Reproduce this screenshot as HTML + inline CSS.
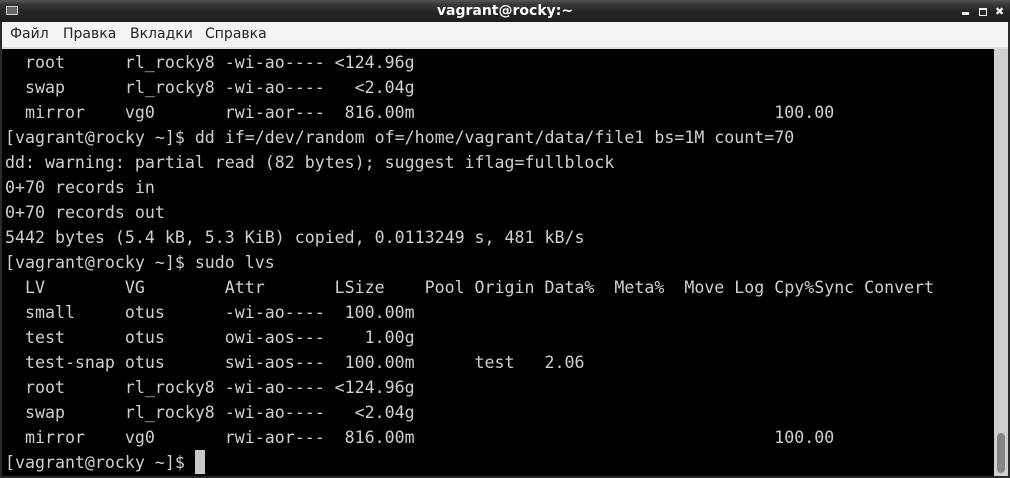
<!DOCTYPE html>
<html><head><meta charset="utf-8"><style>
html,body{margin:0;padding:0;width:1010px;height:478px;overflow:hidden;background:#2a2a2a;}
#title{position:absolute;left:0;top:0;width:1010px;height:22px;background:linear-gradient(#555 0,#3a3a3a 4px,#262626 11px,#1e1e1e 22px);color:#fff;font:bold 14px "DejaVu Sans","Liberation Sans",sans-serif;text-align:center;line-height:22px;}
#menu{position:absolute;left:2px;top:22px;width:1006px;height:25px;background:#f4f4f2;border-bottom:2px solid #dcdcdc;font:14px "DejaVu Sans","Liberation Sans",sans-serif;color:#222;}
#menu span{position:absolute;top:4px;}
#term{position:absolute;left:2px;top:49px;width:992px;height:427px;background:#000;}
#sb{position:absolute;left:994px;top:49px;width:14px;height:427px;background:#d0d0d0;}
#thumb{position:absolute;left:3px;top:384px;width:8px;height:40px;border-radius:4px;background:#858585;}
pre{position:absolute;left:3px;top:1px;margin:0;font:16.6px "DejaVu Sans Mono","Liberation Mono",monospace;line-height:25px;color:#d0d0d0;white-space:pre;}
.cur{display:inline-block;width:10px;height:24px;background:#c8c8c8;vertical-align:top;margin-top:0px;}
.ic{position:absolute;background:#eee;}
</style></head><body>
<div id="title">vagrant@rocky:~</div>
<div class="ic" style="left:962px;top:12px;width:7px;height:3px"></div>
<div style="position:absolute;left:979px;top:8px;width:6px;height:5px;border:1px solid #eee;border-top-width:2px"></div>
<div style="position:absolute;left:995px;top:5px;color:#eee;font:bold 11px 'DejaVu Sans',sans-serif">✖</div>
<div style="position:absolute;left:6px;top:6px;width:10px;height:7px;border:1px solid #ccc;background:#666"></div>
<div id="menu"><span style="left:8px">Файл</span><span style="left:61px">Правка</span><span style="left:128px">Вкладки</span><span style="left:203px">Справка</span></div>
<div id="term"><pre>  root      rl_rocky8 -wi-ao---- &lt;124.96g
  swap      rl_rocky8 -wi-ao----   &lt;2.04g
  mirror    vg0       rwi-aor---  816.00m                                    100.00
[vagrant@rocky ~]$ dd if=/dev/random of=/home/vagrant/data/file1 bs=1M count=70
dd: warning: partial read (82 bytes); suggest iflag=fullblock
0+70 records in
0+70 records out
5442 bytes (5.4 kB, 5.3 KiB) copied, 0.0113249 s, 481 kB/s
[vagrant@rocky ~]$ sudo lvs
  LV        VG        Attr       LSize    Pool Origin Data%  Meta%  Move Log Cpy%Sync Convert
  small     otus      -wi-ao----  100.00m
  test      otus      owi-aos---    1.00g
  test-snap otus      swi-aos---  100.00m      test   2.06
  root      rl_rocky8 -wi-ao---- &lt;124.96g
  swap      rl_rocky8 -wi-ao----   &lt;2.04g
  mirror    vg0       rwi-aor---  816.00m                                    100.00
[vagrant@rocky ~]$ <span class="cur"></span></pre></div>
<div id="sb"><div id="thumb"></div></div>
</body></html>
